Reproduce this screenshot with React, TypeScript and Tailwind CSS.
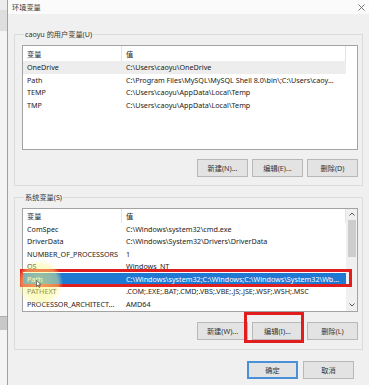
import React from "react";

const FONT = "font-['Noto_Sans','Noto_Sans_CJK_SC',sans-serif]";

type RowData = { name: string; value: string; sel?: "blue" | "gray"; red?: boolean };

function Row({ r }: { r: RowData }) {
  const bg = r.sel === "blue" ? "bg-[#1f78d2] text-white" : r.sel === "gray" ? "bg-[#ededed] text-[#222]" : "text-[#222]";
  return (
    <div className={`relative flex h-[12.5px] w-[323px] shrink-0 items-center ${bg}`}>
      <div className="w-[99px] shrink-0 overflow-hidden whitespace-nowrap pl-[4px]">{r.name}</div>
      <div className="flex-1 overflow-hidden whitespace-nowrap pl-[4px]">{r.value}</div>
      {r.red && (
        <div className="pointer-events-none absolute -left-[3px] -right-[6px] -top-[4px] -bottom-[1.5px] border-[3px] border-[#e21d1d]" />
      )}
    </div>
  );
}

function Header({ h }: { h: string }) {
  return (
    <div className={`flex ${h} w-[323px] shrink-0 items-center text-[#222]`}>
      <div className="flex h-full w-[99px] shrink-0 items-center border-r border-[#e3e3e3] pl-[4px]">变量</div>
      <div className="flex h-full flex-1 items-center border-r border-[#e3e3e3] pl-[4px]">值</div>
    </div>
  );
}

function Chevron({ up }: { up?: boolean }) {
  return (
    <svg width="6" height="4" viewBox="0 0 6 4">
      <path d={up ? "M0.5 3.5 L3 1 L5.5 3.5" : "M0.5 0.5 L3 3 L5.5 0.5"} fill="none" stroke="#555" strokeWidth="1" />
    </svg>
  );
}

function ListBox({ rows, height, headerH, scroll }: { rows: RowData[]; height: string; headerH: string; scroll?: boolean }) {
  return (
    <div className={`flex ${height} w-[336px] border border-[#a3a3a3] bg-white`}>
      <div className="flex w-[323px] flex-col">
        <Header h={headerH} />
        {rows.map((r) => (
          <Row key={r.name} r={r} />
        ))}
      </div>
      {scroll && (
        <div className="flex w-[11px] flex-col bg-[#f0f0f0]">
          <div className="flex h-[11px] items-center justify-center">
            <Chevron up />
          </div>
          <div className="mx-auto h-[37px] w-[8px] bg-[#cdcdcd]" />
          <div className="flex-1" />
          <div className="flex h-[11px] items-center justify-center">
            <Chevron />
          </div>
        </div>
      )}
    </div>
  );
}

function Btn({ label, red, def }: { label: string; red?: boolean; def?: boolean }) {
  return (
    <div
      className={`relative flex h-[18px] w-[51px] items-center justify-center ${
        def ? "border-2 border-[#4a90d9]" : "border border-[#b8b8b8]"
      } bg-[#e3e3e3] text-[#333]`}
    >
      {label}
      {red && (
        <div className="pointer-events-none absolute -left-[9px] -right-[2px] -top-[11px] -bottom-[4px] border-[3px] border-[#e21d1d]" />
      )}
    </div>
  );
}

export default function App() {
  const userRows: RowData[] = [
    { name: "OneDrive", value: "C:\\Users\\caoyu\\OneDrive", sel: "gray" },
    { name: "Path", value: "C:\\Program Files\\MySQL\\MySQL Shell 8.0\\bin\\;C:\\Users\\caoy..." },
    { name: "TEMP", value: "C:\\Users\\caoyu\\AppData\\Local\\Temp" },
    { name: "TMP", value: "C:\\Users\\caoyu\\AppData\\Local\\Temp" },
  ];
  const sysRows: RowData[] = [
    { name: "ComSpec", value: "C:\\Windows\\system32\\cmd.exe" },
    { name: "DriverData", value: "C:\\Windows\\System32\\Drivers\\DriverData" },
    { name: "NUMBER_OF_PROCESSORS", value: "1" },
    { name: "OS", value: "Windows_NT" },
    { name: "Path", value: "C:\\Windows\\system32;C:\\Windows;C:\\Windows\\System32\\Wb...", sel: "blue", red: true },
    { name: "PATHEXT", value: ".COM;.EXE;.BAT;.CMD;.VBS;.VBE;.JS;.JSE;.WSF;.WSH;.MSC" },
    { name: "PROCESSOR_ARCHITECT...", value: "AMD64" },
  ];

  return (
    <div className={`relative flex h-[385px] w-[369px] overflow-hidden bg-[#f0f0f0] text-[7.2px] leading-[10px] ${FONT}`}>
      {/* left strip of desktop behind */}
      <div className="flex w-[7px] shrink-0 flex-col bg-[#f4f4f4]">
        <div className="h-[10px] bg-[#ececec]" />
        <div className="h-[21px] bg-[#dedede]" />
        <div className="h-[285px]" />
        <div className="h-[1px] bg-[#b0b0b0]" />
        <div className="h-[13px] bg-[#c8c8c8]" />
        <div className="flex-1" />
      </div>
      {/* window */}
      <div className="flex flex-1 flex-col border-l border-[#a0a0a0]">
        <div className="flex h-[14px] shrink-0 items-center justify-between bg-[#fbfbfb] pl-[4px] pr-[4px] text-[#333]">
          <span>环境变量</span>
          <svg width="7" height="7" viewBox="0 0 7 7">
            <path d="M0.5 0.5 L6.5 6.5 M6.5 0.5 L0.5 6.5" stroke="#666" strokeWidth="0.9" />
          </svg>
        </div>
        <div className="flex flex-1 flex-col">
          <fieldset className="mx-[6px] mt-[15px] border border-[#dcdcdc] pl-[7px] pb-[8px]">
            <legend className="ml-[2px] px-[1px] leading-[10px] text-[#333]">caoyu 的用户变量(U)</legend>
            <div className="mt-[6px]">
              <ListBox rows={userRows} height="h-[105px]" headerH="h-[15px]" />
            </div>
            <div className="mt-[9px] flex w-[336px] justify-end gap-[4px]">
              <Btn label="新建(N)..." />
              <Btn label="编辑(E)..." />
              <Btn label="删除(D)" />
            </div>
          </fieldset>
          <fieldset className="mx-[6px] mt-[6px] border border-[#dcdcdc] pl-[7px] pb-[9px]">
            <legend className="ml-[2px] px-[1px] leading-[10px] text-[#333]">系统变量(S)</legend>
            <div className="mt-[5.5px]">
              <ListBox rows={sysRows} height="h-[104px]" headerH="h-[14px]" scroll />
            </div>
            <div className="mt-[10px] flex w-[336px] justify-end gap-[4px]">
              <Btn label="新建(W)..." />
              <Btn label="编辑(I)..." red />
              <Btn label="删除(L)" />
            </div>
          </fieldset>
          <div className="mr-[15px] mt-[11px] flex justify-end gap-[5px]">
            <Btn label="确定" def />
            <Btn label="取消" />
          </div>
        </div>
      </div>
      {/* cursor highlight overlay */}
      <div className="pointer-events-none absolute left-[17px] top-[260px] h-[46px] w-[46px] rounded-full bg-[radial-gradient(circle,rgba(250,248,120,0.6)_0%,rgba(250,248,140,0.45)_55%,rgba(250,248,160,0)_72%)]" />
      <svg className="pointer-events-none absolute left-[36px] top-[280px]" width="6" height="8" viewBox="0 0 6 8">
        <path d="M0.5 0.5 L0.5 6.5 L2 5 L3.2 7.5 L4 7.1 L2.9 4.7 L5 4.7 Z" fill="#fff" stroke="#333" strokeWidth="0.6" />
      </svg>
    </div>
  );
}
